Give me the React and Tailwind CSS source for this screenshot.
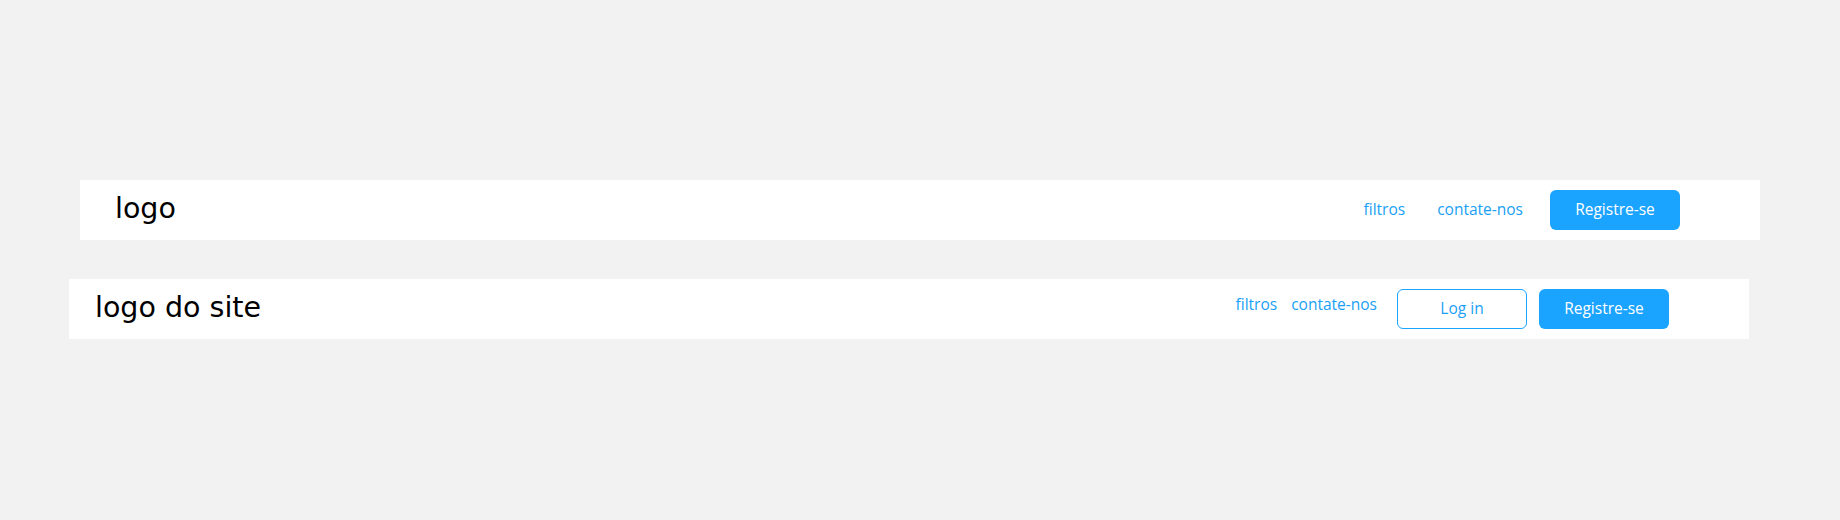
import React from "react";

const nav = { fontFamily: '"Open Sans", "Liberation Sans", sans-serif' };
const logo = { fontFamily: '"DejaVu Sans", "Noto Sans", sans-serif' };

export default function App() {
  return (
    <div className="min-h-[520px] w-[1840px] bg-[#f2f2f2] pt-[180px]">
      <div className="ml-[80px] flex h-[60px] w-[1680px] items-center justify-between bg-white pl-[35px] pr-[80px]">
        <span className="mb-[2px] text-[28.5px] font-normal leading-none text-black" style={logo}>logo</span>
        <div className="flex items-center text-[15.5px]" style={nav}>
          <a className="text-[#1a9ff5]">filtros</a>
          <a className="ml-[32px] text-[#1a9ff5]">contate-nos</a>
          <button className="ml-[27px] h-[40px] w-[130px] rounded-[6px] bg-[#1aa3ff] text-white">Registre-se</button>
        </div>
      </div>
      <div className="ml-[69px] mt-[39px] flex h-[60px] w-[1680px] items-center justify-between bg-white pl-[26px] pr-[80px]">
        <span className="mb-[2px] text-[28.5px] font-normal leading-none text-black" style={logo}>logo do site</span>
        <div className="flex items-center text-[15.5px]" style={nav}>
          <div className="mb-[8px] flex gap-[14px]">
            <a className="text-[#1a9ff5]">filtros</a>
            <a className="text-[#1a9ff5]">contate-nos</a>
          </div>
          <button className="ml-[20px] h-[40px] w-[130px] rounded-[6px] border border-[#1aa3ff] bg-white text-[#1a9ff5]">Log in</button>
          <button className="ml-[12px] h-[40px] w-[130px] rounded-[6px] bg-[#1aa3ff] text-white">Registre-se</button>
        </div>
      </div>
    </div>
  );
}
